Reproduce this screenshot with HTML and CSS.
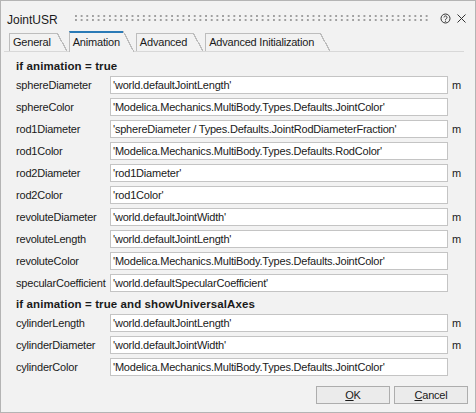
FILE: index.html
```
<!DOCTYPE html>
<html>
<head>
<meta charset="utf-8">
<title>JointUSR</title>
<link rel="stylesheet" href="styles.css">
</head>
<body>
<div class="window">
  <div class="titlebar">
    <span class="title">JointUSR</span>
    <span class="grip"></span>
    <svg class="help" width="11" height="11" viewBox="0 0 11 11">
      <circle cx="5.5" cy="5.5" r="4.5" fill="none" stroke="#333" stroke-width="1"/>
      <path d="M4 4.4a1.5 1.5 0 1 1 2.3 1.3c-.6.35-.8.6-.8 1.2" fill="none" stroke="#333" stroke-width="1"/>
      <circle cx="5.5" cy="8.2" r=".6" fill="#333"/>
    </svg>
    <svg class="close" width="11" height="11" viewBox="0 0 11 11">
      <path d="M1.5 1.5L9.5 9.5M9.5 1.5L1.5 9.5" stroke="#333" stroke-width="1" fill="none"/>
    </svg>
  </div>
  <div class="tabs">
    <div class="tab">General</div>
    <div class="tab active">Animation</div>
    <div class="tab">Advanced</div>
    <div class="tab">Advanced Initialization</div>
  </div>
  <div class="form">
    <div class="hdr">if animation = true</div>
    <div class="lbl">sphereDiameter</div><div class="field">'world.defaultJointLength'</div><div class="unit">m</div>
    <div class="lbl">sphereColor</div><div class="field">'Modelica.Mechanics.MultiBody.Types.Defaults.JointColor'</div>
    <div class="lbl">rod1Diameter</div><div class="field">'sphereDiameter / Types.Defaults.JointRodDiameterFraction'</div><div class="unit">m</div>
    <div class="lbl">rod1Color</div><div class="field">'Modelica.Mechanics.MultiBody.Types.Defaults.RodColor'</div>
    <div class="lbl">rod2Diameter</div><div class="field">'rod1Diameter'</div><div class="unit">m</div>
    <div class="lbl">rod2Color</div><div class="field">'rod1Color'</div>
    <div class="lbl">revoluteDiameter</div><div class="field">'world.defaultJointWidth'</div><div class="unit">m</div>
    <div class="lbl">revoluteLength</div><div class="field">'world.defaultJointLength'</div><div class="unit">m</div>
    <div class="lbl">revoluteColor</div><div class="field">'Modelica.Mechanics.MultiBody.Types.Defaults.JointColor'</div>
    <div class="lbl">specularCoefficient</div><div class="field">'world.defaultSpecularCoefficient'</div>
    <div class="hdr">if animation = true and showUniversalAxes</div>
    <div class="lbl">cylinderLength</div><div class="field">'world.defaultJointLength'</div><div class="unit">m</div>
    <div class="lbl">cylinderDiameter</div><div class="field">'world.defaultJointWidth'</div><div class="unit">m</div>
    <div class="lbl">cylinderColor</div><div class="field">'Modelica.Mechanics.MultiBody.Types.Defaults.JointColor'</div>
  </div>
  <div class="buttons">
    <button class="btn"><u>O</u>K</button>
    <button class="btn"><u>C</u>ancel</button>
  </div>
</div>
</body>
</html>
```
FILE: styles.css
```
html, body {
  margin: 0;
  padding: 0;
  background: #f2f2f2;
}
body {
  font-family: "Liberation Sans", Arial, sans-serif;
  color: #1a1a1a;
}
.window {
  width: 476px;
  height: 413px;
  box-sizing: border-box;
  border: 1px solid #b4b4b4;
  background: #f2f2f2;
  display: flex;
  flex-direction: column;
}
.titlebar {
  display: flex;
  align-items: center;
  height: 22px;
  padding: 6px 8px 0 6px;
}
.title {
  font-size: 12px;
  margin-top: 4px;
  color: #1a1a1a;
}
.grip {
  flex: 1;
  height: 8px;
  margin: 0 10px 0 17px;
  background-image: radial-gradient(circle at 1px 1px, #a0a0a0 0.9px, transparent 1.3px);
  background-size: 5.67px 4px;
  background-position: 0 1px;
}
.help {
  margin-right: 5px;
  display: block;
}
.close {
  display: block;
}
.tabs {
  display: flex;
  align-items: flex-end;
  height: 22px;
  margin: 0 11px 0 3px;
  padding-left: 5px;
  border-bottom: 1px solid #d8d8d8;
}
.tab {
  position: relative;
  height: 18px;
  box-sizing: border-box;
  border-left: 1px solid #bdbdbd;
  border-top: 1px solid #bdbdbd;
  padding: 0 6px 0 3px;
  margin-right: 12px;
  font-size: 11px;
  letter-spacing: -0.2px;
  line-height: 17px;
  white-space: nowrap;
}
.tab::after {
  content: "";
  position: absolute;
  left: 100%;
  top: -1px;
  bottom: 0;
  width: 10px;
  background: linear-gradient(to top right, transparent calc(50% - 0.6px), #bdbdbd calc(50% - 0.6px), #bdbdbd calc(50% + 0.6px), transparent calc(50% + 0.6px));
}
.tab.active {
  height: 21px;
  margin-bottom: -1px;
  border-top: 2px solid #2a7ab6;
  background: #f2f2f2;
  padding-right: 3px;
  margin-right: 13px;
  line-height: 19px;
  z-index: 1;
}
.tab.active::after {
  top: -2px;
  width: 11px;
  background: linear-gradient(to top right, #f2f2f2 calc(50% - 0.6px), #bdbdbd calc(50% - 0.6px), #bdbdbd calc(50% + 0.6px), transparent calc(50% + 0.6px));
}
.form {
  display: grid;
  grid-template-columns: 94px 338px 1fr;
  row-gap: 4px;
  padding: 6px 0 0 15px;
  font-size: 11px;
  letter-spacing: -0.2px;
}
.hdr {
  grid-column: 1 / -1;
  height: 14px;
  line-height: 16px;
  font-size: 11.5px;
  font-weight: bold;
  letter-spacing: 0.1px;
  white-space: nowrap;
}
.lbl {
  grid-column: 1;
  line-height: 18px;
  white-space: nowrap;
}
.field {
  grid-column: 2;
  height: 18px;
  box-sizing: border-box;
  border: 1px solid #c4c4c4;
  background: #ffffff;
  padding: 0 2px;
  line-height: 16px;
  white-space: nowrap;
  overflow: hidden;
}
.unit {
  grid-column: 3;
  padding-left: 4px;
  line-height: 18px;
}
.buttons {
  display: flex;
  justify-content: flex-end;
  gap: 4px;
  padding-right: 7px;
  margin-top: 10px;
}
.btn {
  width: 74px;
  height: 18px;
  box-sizing: border-box;
  border: 1px solid #adadad;
  background: #ebebeb;
  padding: 0;
  font-family: "Liberation Sans", Arial, sans-serif;
  font-size: 11px;
  letter-spacing: -0.2px;
  color: #1a1a1a;
}
```
